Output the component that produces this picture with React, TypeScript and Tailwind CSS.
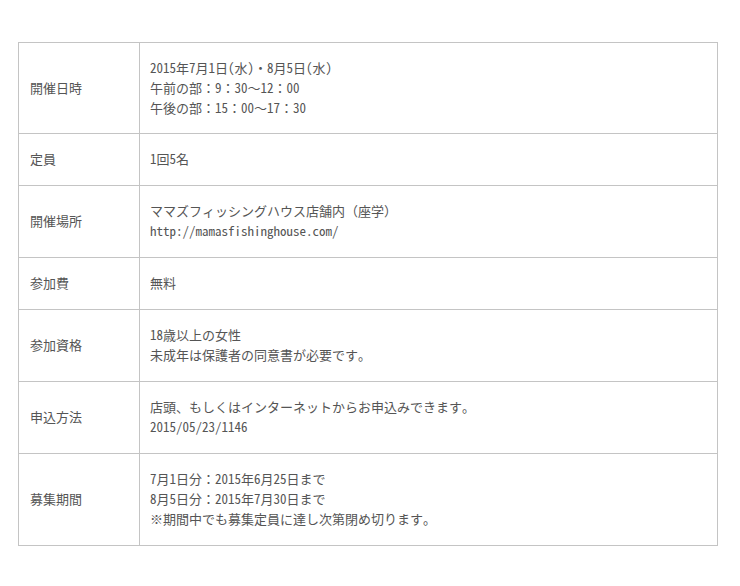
const rows: { label: string; lines: string[] }[] = [
  {
    label: "開催日時",
    lines: ["2015年7月1日(水)・8月5日(水)", "午前の部：9：30〜12：00", "午後の部：15：00〜17：30"],
  },
  { label: "定員", lines: ["1回5名"] },
  { label: "開催場所", lines: ["ママズフィッシングハウス店舗内（座学）", "http://mamasfishinghouse.com/"] },
  { label: "参加費", lines: ["無料"] },
  { label: "参加資格", lines: ["18歳以上の女性", "未成年は保護者の同意書が必要です。"] },
  { label: "申込方法", lines: ["店頭、もしくはインターネットからお申込みできます。", "2015/05/23/1146"] },
  {
    label: "募集期間",
    lines: ["7月1日分：2015年6月25日まで", "8月5日分：2015年7月30日まで", "※期間中でも募集定員に達し次第閉め切ります。"],
  },
];

export default function App() {
  return (
    <div
      className="min-h-[586px] w-[740px] bg-white pl-[18px] pt-[42px] text-[13px] leading-[20px] text-[#555]"
      style={{ fontFamily: '"Noto Sans Mono CJK JP", "DejaVu Sans Mono", "Noto Sans CJK JP", monospace' }}
    >
      <table className="w-[700px] border-collapse">
        <tbody>
          {rows.map((r, i) => (
            <tr key={r.label}>
              <td
                className={
                  "w-[121px] border border-[#c4c4c4] px-[11px] pt-[15px] align-middle " +
                  (i === 0 ? "pb-[15px]" : "pb-[16px]")
                }
              >
                {r.label}
              </td>
              <td
                className={
                  "border border-[#c4c4c4] px-[10px] pt-[15px] align-middle " + (i === 0 ? "pb-[15px]" : "pb-[16px]")
                }
              >
                {r.lines.map((l) => (
                  <div key={l}>{l}</div>
                ))}
              </td>
            </tr>
          ))}
        </tbody>
      </table>
    </div>
  );
}
